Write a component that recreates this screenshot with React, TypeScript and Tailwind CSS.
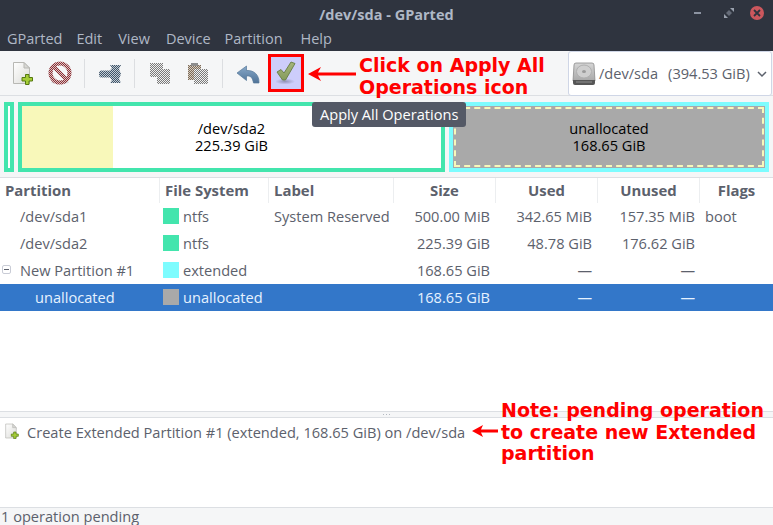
import React from "react";

const font = { fontFamily: '"Open Sans", "Noto Sans", sans-serif' };

function Dither({ id, a, b = "transparent" }: { id: string; a: string; b?: string }) {
  return (
    <pattern id={id} width="2" height="2" patternUnits="userSpaceOnUse">
      <rect width="2" height="2" fill={b} />
      <rect width="1" height="1" fill={a} />
      <rect x="1" y="1" width="1" height="1" fill={a} />
    </pattern>
  );
}

function NewIcon({ size = 24 }: { size?: number }) {
  return (
    <svg width={size} height={size} viewBox="0 0 24 24">
      <defs>
        <linearGradient id="pg" x1="0" y1="0" x2="1" y2="1">
          <stop offset="0" stopColor="#ffffff" />
          <stop offset="1" stopColor="#dcdcd8" />
        </linearGradient>
      </defs>
      <path d="M2.500 1.500H13L18.500 7V22.500H2.500Z" fill="url(#pg)" stroke="#b8b8b4" />
      <path d="M13 1.500V7H18.500Z" fill="#d8d8d4" stroke="#b8b8b4" />
      <path d="M14.500 13.500h3.500v3h3.500v3.500H18v3.500h-3.500V20H11v-3.500h3.500Z" fill="#a4cc38" stroke="#55790f" />
    </svg>
  );
}

function DeleteIcon() {
  return (
    <svg width="24" height="24" viewBox="0 0 24 24">
      <defs>
        <Dither id="dr" a="#8c2f35" b="#dcc6c6" />
      </defs>
      <ellipse cx="12" cy="21.500" rx="9" ry="1.500" fill="#d9d9dc" />
      <circle cx="12" cy="12" r="9.500" fill="none" stroke="url(#dr)" strokeWidth="4" />
      <path d="M5.500 5.500L18.500 18.500" stroke="url(#dr)" strokeWidth="4" />
    </svg>
  );
}

function ResizeIcon() {
  return (
    <svg width="24" height="24" viewBox="0 0 24 24">
      <defs>
        <Dither id="dg" a="#3f5468" b="#c3ccd4" />
      </defs>
      <path d="M3 9.500H12L14 7L12 4H23L21 8L23 13L21 18L23 22H12L14 19L12 16.500H3Q1 16.500 1 13Q1 9.500 3 9.500Z" fill="url(#dg)" />
    </svg>
  );
}

function CopyIcon() {
  return (
    <svg width="24" height="24" viewBox="0 0 24 24">
      <defs>
        <Dither id="dc" a="#7a7a7a" b="#efefef" />
      </defs>
      <rect x="2" y="2" width="13" height="14" fill="url(#dc)" />
      <rect x="9" y="8" width="13" height="15" fill="#ffffff" />
      <rect x="9" y="8" width="13" height="15" fill="url(#dc)" />
    </svg>
  );
}

function PasteIcon() {
  return (
    <svg width="24" height="24" viewBox="0 0 24 24">
      <defs>
        <Dither id="dp" a="#7c6a58" b="#d5ccc0" />
        <Dither id="dq" a="#7a7a7a" b="#f1f1f1" />
      </defs>
      <rect x="2" y="4" width="13" height="15" fill="url(#dp)" />
      <rect x="5" y="2" width="7" height="3" fill="#8d8d8d" />
      <rect x="8" y="8" width="14" height="15" fill="#ffffff" />
      <rect x="8" y="8" width="14" height="15" fill="url(#dq)" />
    </svg>
  );
}

function UndoIcon() {
  return (
    <svg width="24" height="24" viewBox="0 0 24 24">
      <defs>
        <linearGradient id="ug" x1="0" y1="0" x2="0" y2="1">
          <stop offset="0" stopColor="#88a9c9" />
          <stop offset="1" stopColor="#4f7398" />
        </linearGradient>
      </defs>
      <path d="M10.500 5L1 12L10.500 19.500V15C15 14.500 16.500 17 17.500 22H23C23.500 14 18 9 10.500 9.500Z" fill="url(#ug)" stroke="#56789a" strokeWidth="0.700" />
    </svg>
  );
}

function CheckIcon() {
  return (
    <svg width="20" height="24" viewBox="0 0 20 24">
      <defs>
        <radialGradient id="sh">
          <stop offset="0" stopColor="#8484a8" stopOpacity="0.8" />
          <stop offset="1" stopColor="#8484a8" stopOpacity="0" />
        </radialGradient>
        <linearGradient id="cg" x1="0" y1="0" x2="0" y2="1">
          <stop offset="0" stopColor="#a6b57c" />
          <stop offset="1" stopColor="#869c5c" />
        </linearGradient>
      </defs>
      <ellipse cx="9" cy="20.500" rx="10" ry="3" fill="url(#sh)" />
      <path d="M1 11L5 8.500L8 12L15 1L19 2.500L9.500 19H6.500Z" fill="url(#cg)" stroke="#657d42" strokeWidth="0.900" />
    </svg>
  );
}

function DiskIcon() {
  return (
    <svg width="24" height="24" viewBox="0 0 24 24">
      <defs>
        <linearGradient id="hd" x1="0" y1="0" x2="0" y2="1">
          <stop offset="0" stopColor="#d6d6d6" />
          <stop offset="1" stopColor="#a8a8a8" />
        </linearGradient>
      </defs>
      <path d="M4 1H20Q22 1 22 3L23 19H1L2 3Q2 1 4 1Z" fill="url(#hd)" stroke="#8a8a8a" strokeWidth="0.800" />
      <ellipse cx="12" cy="9.500" rx="7.500" ry="6.500" fill="#cfcfcf" stroke="#b0b0b0" />
      <ellipse cx="12" cy="9.500" rx="2" ry="1.600" fill="#9b9b9b" />
      <path d="M1 18H23V21Q23 23 21 23H3Q1 23 1 21Z" fill="#565656" />
      <rect x="4" y="19.500" width="16" height="1" fill="#8f8f8f" />
    </svg>
  );
}

function Sep() {
  return <div className="mx-[7px] h-[29px] w-px bg-[#dcdee1]" />;
}

const columns = "grid grid-cols-[160px_109px_125px_102px_102px_102px_73px]";
const menus = [
  { label: "GParted", cls: "" },
  { label: "Edit", cls: "ml-[14px]" },
  { label: "View", cls: "ml-[16px]" },
  { label: "Device", cls: "ml-[16px]" },
  { label: "Partition", cls: "ml-[14px]" },
  { label: "Help", cls: "ml-[18px]" },
];
const headers = ["Partition", "File System", "Label", "Size", "Used", "Unused", "Flags"];

type Row = {
  name: string;
  indent: string;
  color: string;
  fs: string;
  label?: string;
  size: string;
  used: string;
  unused: string;
  flags?: string;
  expander?: boolean;
  selected?: boolean;
};

const rows: Row[] = [
  { name: "/dev/sda1", indent: "pl-[20px]", color: "bg-[#43e5ad]", fs: "ntfs", label: "System Reserved", size: "500.00 MiB", used: "342.65 MiB", unused: "157.35 MiB", flags: "boot" },
  { name: "/dev/sda2", indent: "pl-[20px]", color: "bg-[#43e5ad]", fs: "ntfs", size: "225.39 GiB", used: "48.78 GiB", unused: "176.62 GiB" },
  { name: "New Partition #1", indent: "pl-[20px]", color: "bg-[#7dfcfe]", fs: "extended", size: "168.65 GiB", used: "—", unused: "—", expander: true },
  { name: "unallocated", indent: "pl-[35px]", color: "bg-[#a9a9a9]", fs: "unallocated", size: "168.65 GiB", used: "—", unused: "—", selected: true },
];

export default function App() {
  return (
    <div className="relative flex h-[525px] w-[773px] flex-col overflow-hidden bg-white text-[14.600px] text-[#5c616c]" style={font}>
      <header className="relative h-[51px] shrink-0 bg-[#2f343f] text-[#afb8c6]">
        <div className="flex h-[28px] items-center justify-center pt-[1px] text-[14.500px] font-bold">/dev/sda - GParted</div>
        <nav className="flex h-[23px] items-center pl-[7px] text-[14.500px] leading-none">
          {menus.map((m) => (
            <span key={m.label} className={m.cls}>{m.label}</span>
          ))}
        </nav>
        <div className="absolute right-[9px] top-[6px] flex items-center">
          <span className="h-[2px] w-[7px] bg-[#8c93a1]" />
          <svg width="10" height="10" viewBox="0 0 10 10" className="ml-[23px]">
            <path d="M6 0H10V4Z M4 10H0V6Z" fill="#9aa1ae" />
            <path d="M2 5L5 2L8 5L5 8Z" fill="#666c79" />
          </svg>
          <span className="ml-[16px] flex h-[14px] w-[14px] items-center justify-center rounded-full bg-[#cc575d]">
            <svg width="8" height="8" viewBox="0 0 8 8">
              <path d="M1 1L7 7M7 1L1 7" stroke="#2f343f" strokeWidth="1.800" />
            </svg>
          </span>
        </div>
      </header>

      <section className="flex h-[45px] shrink-0 items-center justify-between border-b border-[#dcdfe3] bg-[#f5f6f7] pl-[11px]">
        <div className="flex items-center">
          <div className="flex w-[24px] justify-center"><NewIcon /></div>
          <div className="ml-[13px] flex w-[24px] justify-center"><DeleteIcon /></div>
          <div className="ml-[5px]"><Sep /></div>
          <div className="ml-[6px] flex w-[24px] justify-center"><ResizeIcon /></div>
          <div className="ml-[5px]"><Sep /></div>
          <div className="ml-[6px] flex w-[24px] justify-center"><CopyIcon /></div>
          <div className="ml-[14px] flex w-[24px] justify-center"><PasteIcon /></div>
          <div className="ml-[5px]"><Sep /></div>
          <div className="ml-[6px] flex w-[24px] justify-center"><UndoIcon /></div>
          <div className="ml-[8px] flex h-[38px] w-[36px] items-center justify-center border-[3px] border-[#ff0000] bg-[#cdcdfb]"><CheckIcon /></div>
        </div>
        <div className="mb-[-1px] mr-[1px] flex h-[45px] w-[204px] items-center rounded-[3px] border border-[#cfd6e6] bg-white pl-[3px] text-[14.600px]">
          <DiskIcon />
          <span className="ml-[3px]">/dev/sda</span>
          <span className="ml-[10px]">(394.53 GiB)</span>
          <svg width="12" height="12" viewBox="0 0 12 12" className="ml-[6px]">
            <path d="M2 4L6 8L10 4" fill="none" stroke="#5c616c" strokeWidth="1.500" />
          </svg>
        </div>
      </section>

      <section className="flex h-[82px] shrink-0 gap-[4px] border-b border-[#dcdfe3] bg-[#f5f6f7] px-[4px] pt-[6px] text-black">
        <div className="h-[70px] w-[10px] border-[4px] border-[#43e5ad] bg-white" />
        <div className="relative flex h-[70px] w-[427px] items-center justify-center border-[4px] border-[#43e5ad] bg-white">
          <div className="absolute inset-y-0 left-0 w-[91px] bg-[#f8f8ba]" />
          <div className="relative text-center text-[14.600px] leading-[17px]">
            <div>/dev/sda2</div>
            <div>225.39 GiB</div>
          </div>
        </div>
        <div className="h-[70px] w-[320px] border-[4px] border-[#7dfcfe] bg-[#a9a9a9] p-px">
          <div className="flex h-full items-center justify-center border-2 border-dashed border-[#f8f8ba] text-center text-[14.600px] leading-[17px]">
            <div>
              <div>unallocated</div>
              <div>168.65 GiB</div>
            </div>
          </div>
        </div>
      </section>

      <main className="flex min-h-0 flex-1 flex-col">
        <div className={`${columns} h-[25px] shrink-0 items-center text-[14.900px] font-bold`}>
          {headers.map((h, i) => (
            <div key={h} className={`flex h-full items-center border-r border-[#eceef0] ${i < 3 ? "pl-[5px]" : "justify-center"} ${i === 6 ? "border-r-0" : ""}`}>
              {h}
            </div>
          ))}
        </div>
        {rows.map((r) => (
          <div key={r.name} className={`${columns} h-[27px] items-center text-[14.600px] ${r.selected ? "bg-[#3377c9] text-[#e6f2ff]" : ""}`}>
            <div className={`relative ${r.indent}`}>
              {r.expander && (
                <span className="absolute left-[2px] top-[5px] flex h-[9px] w-[9px] items-center justify-center rounded-[2px] border border-[#c9ccd6] bg-white">
                  <span className="h-px w-[5px] bg-[#5c616c]" />
                </span>
              )}
              {r.name}
            </div>
            <div className="flex items-center gap-[4px] pl-[3px]">
              <span className={`h-[16px] w-[16px] shrink-0 ${r.color}`} />
              <span>{r.fs}</span>
            </div>
            <div className="pl-[5px]">{r.label}</div>
            <div className="pr-[6px] text-right">{r.size}</div>
            <div className="pr-[6px] text-right">{r.used}</div>
            <div className="pr-[5px] text-right">{r.unused}</div>
            <div className="pl-[5px]">{r.flags}</div>
          </div>
        ))}
      </main>

      <div className="flex h-[7px] shrink-0 items-center justify-center gap-[2px] border-y border-[#dcdfe3] bg-[#f5f6f7]">
        <span className="h-px w-px bg-[#b5bac2]" />
        <span className="h-px w-px bg-[#b5bac2]" />
        <span className="h-px w-px bg-[#b5bac2]" />
      </div>
      <section className="flex h-[89px] shrink-0 items-start gap-[7px] pl-[4px] pt-[5px] text-[14.600px]">
        <NewIcon size={16} />
        <span className="leading-[19px]">Create Extended Partition #1 (extended, 168.65 GiB) on /dev/sda</span>
      </section>
      <footer className="flex h-[18px] shrink-0 items-center border-t border-[#dcdfe3] bg-[#f5f6f7] pl-px text-[14.600px]">
        1 operation pending
      </footer>

      <div className="absolute left-[312px] top-[102px] flex h-[25px] items-center rounded-[3px] bg-[#545966] px-[8px] text-[14.600px] text-white">
        Apply All Operations
      </div>

      <div className="absolute left-[359px] top-[54px] whitespace-nowrap text-[19px] font-bold leading-[22px] text-[#ff0000]" style={{ fontFamily: '"DejaVu Sans", sans-serif' }}>
        <div>Click on Apply All</div>
        <div>Operations icon</div>
      </div>
      <svg className="absolute left-[308px] top-[67px]" width="50" height="14" viewBox="0 0 50 14">
        <path d="M0 7L13 0L10 5.500H48V8.500H10L13 14Z" fill="#ff0000" />
      </svg>

      <div className="absolute left-[501px] top-[400px] whitespace-nowrap text-[19px] font-bold leading-[21.500px] text-[#ff0000]" style={{ fontFamily: '"DejaVu Sans", sans-serif' }}>
        <div>Note: pending operation</div>
        <div>to create new Extended</div>
        <div>partition</div>
      </div>
      <svg className="absolute left-[472px] top-[424px]" width="27" height="14" viewBox="0 0 27 14">
        <path d="M0 7L11 1L9 5.500H26V8.500H9L11 13Z" fill="#ff0000" />
      </svg>
    </div>
  );
}
